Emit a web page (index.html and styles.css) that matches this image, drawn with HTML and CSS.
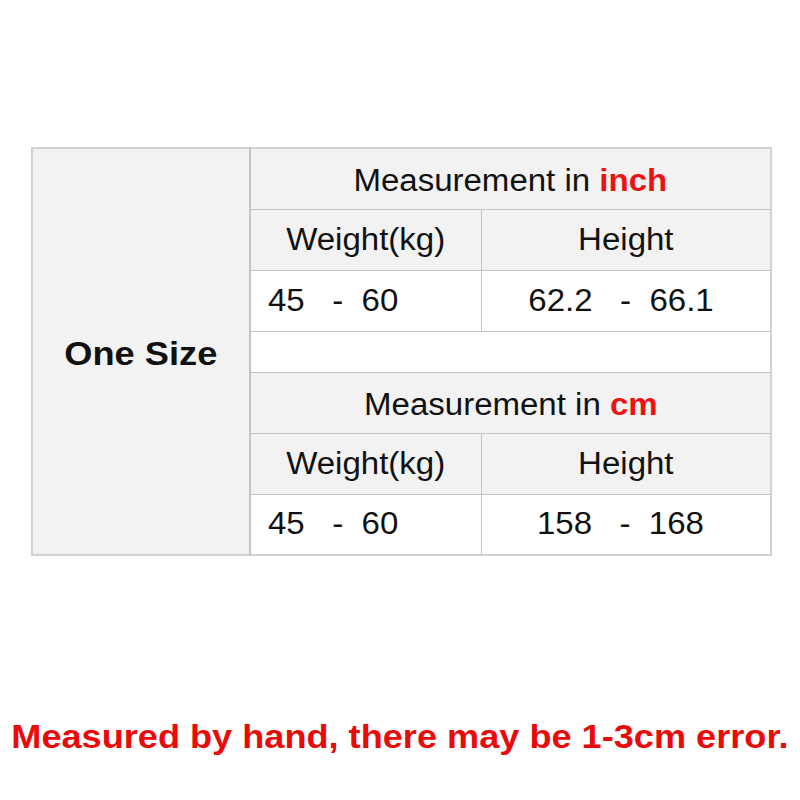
FILE: index.html
```html
<!DOCTYPE html>
<html>
<head>
<meta charset="utf-8">
<link rel="stylesheet" href="styles.css">
</head>
<body>
<div class="page">
  <table class="size-table">
    <colgroup>
      <col class="c1"><col class="c2"><col class="c3">
    </colgroup>
    <tr class="r-head">
      <td class="size-cell" rowspan="7"><span class="sx">One Size</span></td>
      <td class="head title" colspan="2"><span class="sx">Measurement in <b class="red">inch</b></span></td>
    </tr>
    <tr class="r-std">
      <td class="head"><span class="sx">Weight(kg)</span></td>
      <td class="head"><span class="sx">Height</span></td>
    </tr>
    <tr class="r-std">
      <td class="data left"><span class="sx">45   -  60</span></td>
      <td class="data right"><span class="sx">62.2   -  66.1</span></td>
    </tr>
    <tr class="r-gap">
      <td class="blank" colspan="2"></td>
    </tr>
    <tr class="r-head">
      <td class="head title" colspan="2"><span class="sx">Measurement in <b class="red">cm</b></span></td>
    </tr>
    <tr class="r-std">
      <td class="head"><span class="sx">Weight(kg)</span></td>
      <td class="head"><span class="sx">Height</span></td>
    </tr>
    <tr class="r-std">
      <td class="data left"><span class="sx">45   -  60</span></td>
      <td class="data right"><span class="sx">158   -  168</span></td>
    </tr>
  </table>
  <p class="note"><span class="note-text">Measured by hand, there may be 1-3cm error.</span></p>
</div>
</body>
</html>
```
FILE: styles.css
```css
html, body {
  margin: 0;
  padding: 0;
  background: #fff;
}
body {
  width: 800px;
  height: 800px;
  font-family: "Liberation Sans", Arial, sans-serif;
  color: #111;
}
.page {
  padding-top: 147px;
}
.size-table {
  margin-left: 31px;
  border-collapse: collapse;
  table-layout: fixed;
  width: 741px;
  border: 2px solid #d2d2d2;
}
.c1 { width: 218px; }
.c2 { width: 231px; }
.c3 { width: 290px; }
.size-table td {
  border: 1px solid #c4c4c4;
  padding: 0;
  text-align: center;
  white-space: pre;
  font-size: 31px;
}
.r-head, .r-std { height: 61px; }
.r-gap { height: 41px; }
.size-cell {
  background: #f2f2f2;
  font-weight: bold;
  font-size: 34px !important;
  border-right: 2px solid #c4c4c4 !important;
  padding-top: 3px !important;
}
.head { background: #f2f2f2; }
.title { padding-top: 4px !important; }
.data, .blank { background: #fff; }
.data.left { text-align: left; padding-left: 17px !important; }
.data.right { padding-right: 10px !important; }
.sx {
  display: inline-block;
  transform: scaleX(1.065);
}
.data.left .sx { transform-origin: left center; }
.red { color: #ee1111; font-weight: bold; }
.note {
  margin: 0;
  margin-top: 162px;
  width: 800px;
  text-align: center;
  color: #ea0a0a;
  font-weight: bold;
  font-size: 33px;
  white-space: nowrap;
}
.note-text {
  display: inline-block;
  transform: scaleX(1.095);
}
```
